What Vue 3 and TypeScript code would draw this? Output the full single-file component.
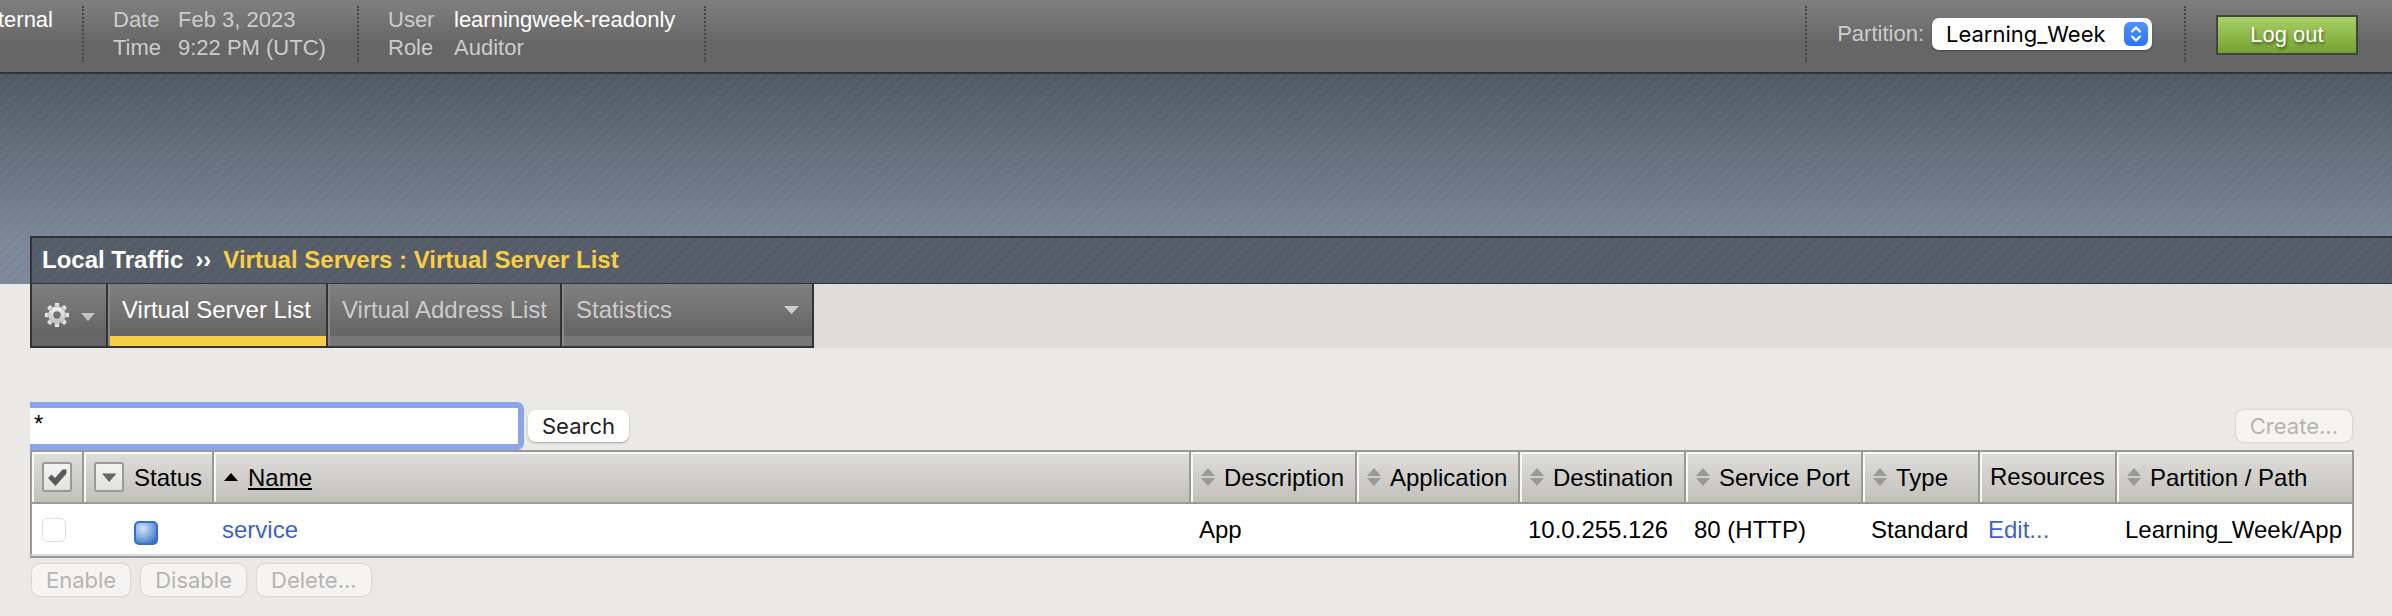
<script setup lang="ts">
import { ref } from 'vue'

interface Column {
  key: string
  label: string
  sortable: boolean
}

interface VirtualServer {
  name: string
  description: string
  application: string
  destination: string
  port: string
  type: string
  path: string
}

const columns: Column[] = [
  { key: 'description', label: 'Description', sortable: true },
  { key: 'application', label: 'Application', sortable: true },
  { key: 'destination', label: 'Destination', sortable: true },
  { key: 'port', label: 'Service Port', sortable: true },
  { key: 'type', label: 'Type', sortable: true },
  { key: 'resources', label: 'Resources', sortable: false },
  { key: 'path', label: 'Partition / Path', sortable: true },
]

const servers: VirtualServer[] = [
  {
    name: 'service',
    description: 'App',
    application: '',
    destination: '10.0.255.126',
    port: '80 (HTTP)',
    type: 'Standard',
    path: 'Learning_Week/App',
  },
]

const bulkActions = ['Enable', 'Disable', 'Delete...']
const query = ref('*')
const partition = ref('Learning_Week')
</script>

<template>
  <div class="page">
    <header class="topbar">
      <div class="host"><span>ternal</span></div>
      <dl class="info when">
        <dt>Date</dt><dd>Feb 3, 2023</dd>
        <dt>Time</dt><dd>9:22 PM (UTC)</dd>
      </dl>
      <dl class="info who">
        <dt>User</dt><dd class="strong">learningweek-readonly</dd>
        <dt>Role</dt><dd>Auditor</dd>
      </dl>
      <div class="partition">
        <label for="partition">Partition:</label>
        <div class="select-wrap">
          <select id="partition" v-model="partition">
            <option>Learning_Week</option>
          </select>
          <svg class="stepper" viewBox="0 0 24 24" aria-hidden="true">
            <defs>
              <linearGradient id="stepperFill" x1="0" y1="0" x2="0" y2="1">
                <stop offset="0" stop-color="#4c93f8" />
                <stop offset="1" stop-color="#2f74f6" />
              </linearGradient>
            </defs>
            <rect width="24" height="24" rx="6" fill="url(#stepperFill)" />
            <path d="M8 9.5 12 5.5 16 9.5M8 14.5 12 18.5 16 14.5" fill="none" stroke="#fff" stroke-width="2.2" stroke-linecap="round" stroke-linejoin="round" />
          </svg>
        </div>
      </div>
      <div class="session"><button type="button" class="logout">Log out</button></div>
    </header>

    <div class="banner">
      <nav class="crumbs" aria-label="Breadcrumb">
        <span>Local Traffic</span><span class="sep">››</span><span class="current">Virtual Servers : Virtual Server List</span>
      </nav>
    </div>

    <nav class="tabs" aria-label="Sections">
      <button type="button" class="tab gear" aria-label="Preferences">
        <svg width="26" height="26" viewBox="0 0 26 26" aria-hidden="true">
          <defs>
            <linearGradient id="gearFill" x1="0" y1="0" x2="0" y2="1">
              <stop offset="0" stop-color="#f4f4f4" />
              <stop offset="1" stop-color="#bdbdbd" />
            </linearGradient>
          </defs>
          <g fill="url(#gearFill)">
            <path fill-rule="evenodd" d="M13 4.5a8.5 8.5 0 1 0 0 17a8.5 8.5 0 0 0 0-17ZM13 9.3a3.7 3.7 0 1 1 0 7.4a3.7 3.7 0 0 1 0-7.4Z" />
            <path v-for="n in 8" :key="n" d="M11 1h4l.5 4.5h-5Z" :transform="`rotate(${n * 45} 13 13)`" />
          </g>
        </svg>
        <svg class="caret" width="14" height="8" viewBox="0 0 14 8" aria-hidden="true"><path d="M0 0h14L7 8Z" fill="#c4c4c4" /></svg>
      </button>
      <a href="#" class="tab active">Virtual Server List</a>
      <a href="#" class="tab">Virtual Address List</a>
      <a href="#" class="tab menu">Statistics
        <svg width="15" height="8" viewBox="0 0 15 8" aria-hidden="true"><path d="M0 0h15L7.5 8Z" fill="#cfcfcf" /></svg>
      </a>
    </nav>

    <main class="content">
      <form class="toolbar" @submit.prevent>
        <input v-model="query" class="search" type="text" aria-label="Search virtual servers" />
        <button type="submit" class="btn">Search</button>
        <button type="button" class="btn create" disabled>Create...</button>
      </form>

      <table class="grid">
        <colgroup>
          <col class="c-check" /><col class="c-status" /><col />
          <col v-for="c in columns" :key="c.key" :class="`c-${c.key}`" />
        </colgroup>
        <thead>
          <tr>
            <th>
              <button type="button" class="mini" aria-label="Select all">
                <svg width="26" height="26" viewBox="0 0 26 26" aria-hidden="true"><path d="M4 14 7.5 10.5 11 14 18.5 5.5 22.5 5.5 22.5 9.5 11.5 22Z" fill="#5c5c5c" /></svg>
              </button>
            </th>
            <th>
              <div class="head">
                <button type="button" class="mini" aria-label="Filter by status">
                  <svg width="26" height="26" viewBox="0 0 26 26" aria-hidden="true"><path d="M6 9.5h14.5L13.2 18Z" fill="#666" /></svg>
                </button>
                <span class="label">Status</span>
              </div>
            </th>
            <th>
              <a href="#" class="head">
                <svg width="14" height="18" viewBox="0 0 14 18" aria-hidden="true"><path d="M0 13 7 5l7 8Z" fill="#000" /></svg>
                <span class="label sorted">Name</span>
              </a>
            </th>
            <th v-for="c in columns" :key="c.key">
              <a v-if="c.sortable" href="#" class="head sort">
                <svg width="14" height="18" viewBox="0 0 14 18" aria-hidden="true"><path d="M0 8 7 0l7 8ZM0 10h14L7 18Z" fill="#999" /></svg>
                <span class="label">{{ c.label }}</span>
              </a>
              <span v-else class="head">{{ c.label }}</span>
            </th>
          </tr>
        </thead>
        <tbody>
          <tr v-for="s in servers" :key="s.name">
            <td><input type="checkbox" class="tick" disabled :aria-label="`Select ${s.name}`" /></td>
            <td>
              <svg class="state" width="24" height="24" viewBox="0 0 24 24" role="img" aria-label="Unknown">
                <defs>
                  <radialGradient id="stateFill" cx=".35" cy=".3" r=".85">
                    <stop offset="0" stop-color="#d3e3f6" />
                    <stop offset=".5" stop-color="#80abdf" />
                    <stop offset="1" stop-color="#2c68c4" />
                  </radialGradient>
                </defs>
                <rect x="1" y="1" width="22" height="22" rx="4" fill="url(#stateFill)" stroke="#3570c8" stroke-width="2" />
              </svg>
            </td>
            <td><a href="#" class="link">{{ s.name }}</a></td>
            <td>{{ s.description }}</td>
            <td>{{ s.application }}</td>
            <td>{{ s.destination }}</td>
            <td>{{ s.port }}</td>
            <td>{{ s.type }}</td>
            <td><a href="#" class="link">Edit...</a></td>
            <td>{{ s.path }}</td>
          </tr>
        </tbody>
      </table>

      <div class="bulk">
        <button v-for="a in bulkActions" :key="a" type="button" class="btn" disabled>{{ a }}</button>
      </div>
    </main>
  </div>
</template>

<style>
body {
  margin: 0;
  background: #eae9e5;
}
</style>

<style scoped>
.page {
  min-height: 100vh;
  background: #eae9e5;
  font-family: "Liberation Sans", Arial, sans-serif;
  font-size: 24px;
  line-height: 28px;
  color: #000;
}
.page * {
  box-sizing: border-box;
}
button,
input,
select {
  margin: 0;
  padding: 0;
  font: inherit;
}
a {
  color: inherit;
  text-decoration: none;
}
svg {
  display: block;
  flex: none;
}

/* top bar */
.topbar {
  display: flex;
  align-items: flex-start;
  height: 74px;
  padding-top: 6px;
  border-bottom: 2px solid #333;
  background: linear-gradient(#808080, #666 60%);
  font-size: 22px;
  color: #ccc;
}
.host {
  display: flex;
  justify-content: flex-end;
  width: 53px;
  overflow: hidden;
  color: #fff;
}
.host,
.info {
  margin: 0;
}
.info {
  display: grid;
  align-content: start;
  height: 56px;
  padding-left: 29px;
  border-left: 2px dotted #444;
}
.when {
  grid-template-columns: 65px auto;
  width: 275px;
  margin-left: 29px;
}
.who {
  grid-template-columns: 66px auto;
  width: 349px;
  border-right: 2px dotted #444;
}
dd {
  margin: 0;
}
.strong {
  color: #fff;
}
.partition {
  display: flex;
  align-items: center;
  gap: 8px;
  height: 56px;
  margin-left: auto;
  padding: 0 32px 0 30px;
  border-left: 2px dotted #444;
  border-right: 2px dotted #444;
}
.select-wrap {
  position: relative;
  width: 220px;
}
select {
  display: block;
  appearance: none;
  width: 100%;
  height: 32px;
  padding: 0 30px 0 14px;
  border: 0;
  border-radius: 7px;
  background: #fff;
  box-shadow: 0 1px 2px rgba(0, 0, 0, 0.35);
  font-family: Inter, sans-serif;
  font-size: 22px;
  color: #000;
}
.stepper {
  position: absolute;
  top: 4px;
  right: 4px;
  width: 24px;
  height: 24px;
  pointer-events: none;
}
.session {
  padding: 9px 34px 0 30px;
}
.logout {
  display: block;
  width: 142px;
  height: 40px;
  border: 2px solid #444;
  background: linear-gradient(#a9d067, #74a230);
  color: #fff;
  text-shadow: 1px 2px 3px rgba(0, 0, 0, 0.5);
}

/* banner */
.banner {
  padding: 162px 0 0 30px;
  background:
    repeating-linear-gradient(135deg, rgba(255, 255, 255, 0.025) 0 4px, transparent 4px 8px),
    linear-gradient(#4f5964, #7b8798 80%);
}
.crumbs {
  display: flex;
  gap: 12px;
  height: 48px;
  padding: 8px 10px 0;
  border: 2px solid #333;
  border-right: 0;
  border-bottom-width: 1px;
  background: repeating-linear-gradient(135deg, #57606b 0 4px, #535c67 4px 8px);
  font-weight: bold;
  color: #fff;
}
.current {
  color: #f8ce46;
}

/* tabs */
.tabs {
  display: flex;
  height: 64px;
  margin-left: 30px;
  background: #deddd9;
}
.tab {
  width: 234px;
  padding: 12px 0 0 14px;
  border: 0 solid #333;
  border-right-width: 2px;
  border-bottom-width: 2px;
  background:
    linear-gradient(#888, #888) left / 2px 100% no-repeat,
    linear-gradient(#777, #777) bottom / 100% 10px no-repeat,
    linear-gradient(#808080, #666 80%);
  white-space: nowrap;
  color: #ccc;
}
.gear {
  display: flex;
  align-items: center;
  gap: 11px;
  width: 78px;
  padding: 0 0 0 12px;
  border-left-width: 2px;
  background: linear-gradient(#808080, #666 80%);
}
.caret {
  margin-top: 4px;
}
.active {
  width: 220px;
  background:
    linear-gradient(#888, #888) left / 2px 100% no-repeat,
    linear-gradient(#f8ce46, #f8ce46) bottom / 100% 10px no-repeat,
    linear-gradient(#808080, #666 80%);
  color: #fff;
}
.menu {
  display: flex;
  justify-content: space-between;
  width: 252px;
  padding-right: 13px;
}
.menu svg {
  margin-top: 10px;
}

/* content */
.content {
  padding: 54px 38px 0 30px;
}
.toolbar {
  display: flex;
  align-items: center;
  gap: 4px;
}
.search {
  width: 494px;
  height: 48px;
  padding: 0 4px 4px;
  border: 6px solid #8aa6e8;
  border-left: 0;
  border-radius: 0 7px 7px 0;
  outline: 0;
  background: #fff;
}
.btn {
  height: 32px;
  padding: 0 14px;
  border: 0;
  border-radius: 8px;
  background: #fff;
  box-shadow: 0 1px 2px rgba(0, 0, 0, 0.3);
  font-family: Inter, sans-serif;
  font-size: 22px;
  color: #222;
}
.btn:disabled {
  background: #f5f4f2;
  box-shadow: 0 0 2px rgba(0, 0, 0, 0.25);
  color: #b5b4b2;
}
.create {
  margin-left: auto;
  margin-right: 2px;
}

/* table */
.grid {
  width: 100%;
  table-layout: fixed;
  border-collapse: separate;
  border-spacing: 0;
  border: solid #999;
  border-width: 2px 2px 2px 0;
}
.c-check { width: 52px; }
.c-status { width: 130px; }
.c-description { width: 166px; }
.c-application { width: 163px; }
.c-destination { width: 166px; }
.c-port { width: 177px; }
.c-type { width: 117px; }
.c-resources { width: 137px; }
.c-path { width: 237px; }
th {
  height: 52px;
  padding: 0 0 0 10px;
  border-left: 2px solid #999;
  border-bottom: 2px solid #999;
  background: linear-gradient(#dfdeda, #c1c0bb);
  box-shadow: inset 2px 2px 0 #f8f8f7;
  font-weight: normal;
  text-align: left;
  white-space: nowrap;
}
.head {
  display: flex;
  align-items: center;
  gap: 10px;
}
.sort {
  gap: 9px;
}
.label {
  padding-top: 2px;
}
.sorted {
  text-decoration: underline;
  text-decoration-thickness: 2px;
  text-underline-offset: 2px;
}
.mini {
  display: block;
  width: 30px;
  height: 30px;
  border: 2px solid #999;
  border-radius: 3px;
  background: linear-gradient(#f4f4f3, #e2e2e0);
}
td {
  height: 52px;
  padding: 2px 0 0 10px;
  border-bottom: 2px solid #ddd;
  background: #fff;
  white-space: nowrap;
}
td:first-child {
  border-left: 2px solid #999;
}
.tick {
  display: block;
  appearance: none;
  width: 24px;
  height: 24px;
  border: 1px solid #ddd;
  border-radius: 5px;
  background: #fff;
}
.state {
  margin: 6px 0 0 42px;
}
.link {
  color: #3c63c8;
}
.bulk {
  display: flex;
  gap: 11px;
  padding: 6px 2px 20px;
}
</style>
